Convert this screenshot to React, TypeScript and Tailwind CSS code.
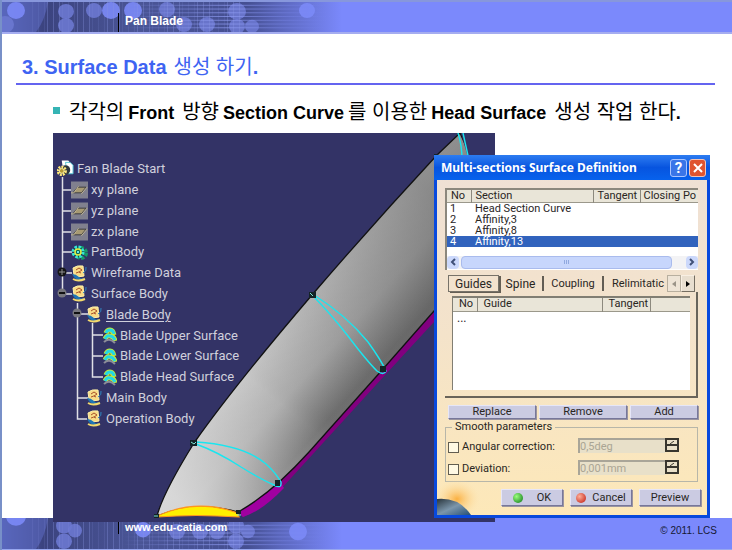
import React from "react";

const SANS = "font-['Liberation_Sans','Noto_Sans_CJK_KR',sans-serif]";

type Dot = [number, number, number];

const headerDots: Dot[] = [
  [14, 9, 9], [64, 10, 8], [64, 25, 8], [92, 9, 8], [109, 9, 9], [3, 24, 9], [131, 9, 9],
  [165, 8, 8], [182, 24, 8], [205, 24, 8], [235, 10, 9], [235, 26, 8], [250, 26, 7], [305, 9, 8],
];
const footerDots: Dot[] = [
  [14, -2, 10], [62, 8, 8], [62, 24, 8], [73, 13, 7], [92, -4, 8], [107, -4, 8], [141, 12, 8],
  [175, 14, 8], [198, 14, 8], [215, 14, 8], [234, 8, 8], [234, 24, 8], [246, 14, 7], [296, 14, 9],
];

function BandArt({ id, dots }: { id: string; dots: Dot[] }) {
  const verticals = Array.from({ length: 42 }, (_, i) => 30 + i * 5 + (i % 3));
  return (
    <svg className="absolute left-0 top-0 h-full w-[340px]" viewBox="0 0 340 32" preserveAspectRatio="none" aria-hidden="true">
      <defs>
        <linearGradient id={id}>
          <stop offset="0" stopColor="#5563b8" />
          <stop offset="0.12" stopColor="#3b437f" />
          <stop offset="0.4" stopColor="#4a5596" />
          <stop offset="0.72" stopColor="#454f92" />
          <stop offset="0.82" stopColor="#5b67bd" />
          <stop offset="1" stopColor="#7b89fc" />
        </linearGradient>
        <linearGradient id={id + "h"}>
          <stop offset="0" stopColor="#8e9bf2" stopOpacity="0" />
          <stop offset="0.5" stopColor="#8e9bf2" stopOpacity="0.75" />
          <stop offset="1" stopColor="#7a88fb" stopOpacity="0" />
        </linearGradient>
      </defs>
      <rect width="340" height="32" fill={`url(#${id})`} />
      <path d="M0 0H46Q43 20 34 32H0Z" fill="#5b69c0" opacity="0.6" />
      {dots.map(([x, y, r], i) => (
        <circle key={i} cx={x} cy={y} r={r} fill={i === 0 || i === 4 || i === 6 || i === 13 ? "#7b89f7" : "#6b78d0"} opacity="0.9" />
      ))}
      {verticals.map((x) => (
        <path key={x} d={`M${x + 0.5} 0V32`} stroke="#8794e0" strokeOpacity={x % 2 ? 0.35 : 0.15} />
      ))}
      {[3, 7, 11, 15, 19, 23, 27].map((y) => (
        <rect key={y} x="120" y={y} width="210" height="1" fill={`url(#${id}h)`} />
      ))}
    </svg>
  );
}

function StartIcon() {
  return (
    <svg width="17" height="18" viewBox="0 0 18 18" aria-hidden="true">
      <path d="M5 0h7l2 3v10H7z" fill="#fff" />
      <path d="M9 2h5l3 3v9h-6z" fill="#fff" stroke="#52c4d2" />
      <circle cx="9" cy="10" r="5" fill="#30383e" />
      <circle cx="5" cy="11" r="4" fill="none" stroke="#ffe979" strokeWidth="3" strokeDasharray="2 1" />
      <circle cx="5" cy="11" r="2.5" fill="#b59a36" stroke="#fff0a0" />
    </svg>
  );
}

function PlaneIcon() {
  return (
    <svg width="17" height="18" viewBox="0 0 18 18" aria-hidden="true">
      <path d="M0 0h18v18H0z" fill="#80808e" />
      <path d="M2 12l5-6h9l-5 6z" fill="#a79a73" stroke="#39393c" />
      <path d="M0 12h3l5-7M11 13l6-7" fill="none" stroke="#c1b795" />
    </svg>
  );
}

function PartIcon() {
  return (
    <svg width="17" height="17" viewBox="0 0 17 17" aria-hidden="true">
      <circle cx="10" cy="9" r="5" fill="none" stroke="#169b68" strokeWidth="4" strokeDasharray="3 1.5" />
      <circle cx="7" cy="8" r="5" fill="#153e42" stroke="#35e6d3" strokeWidth="3" strokeDasharray="2.5 1.4" />
      <circle cx="7" cy="8" r="3" fill="#086c59" stroke="#e5ef42" strokeWidth="1.5" />
      <path d="M6 7h2v2H6z" fill="#62eee6" />
    </svg>
  );
}

function BodyIcon() {
  return (
    <svg width="17" height="17" viewBox="0 0 17 17" aria-hidden="true">
      <path d="M2 3Q6 0 12 1L13 11Q8 13 3 10Z" fill="#f8dc86" stroke="#fff0aa" />
      <path d="M5 5l3-2 3 2-3 2M5 8q3-2 5 0" fill="none" stroke="#a9522c" />
      <path d="M1 9Q5 9 8 12T14 12Q11 17 5 14Q3 13 1 9" fill="#1f76b4" />
      <path d="M2 14Q7 17 14 14" stroke="#f3d96c" strokeWidth="2" fill="none" />
      <path d="M12 8Q16 6 15 2" stroke="#2f85bf" fill="none" />
    </svg>
  );
}

function SurfaceIcon() {
  return (
    <svg width="14" height="17" viewBox="0 0 14 17" aria-hidden="true" fill="none">
      <path d="M3 6Q4 3 7 3Q10 3 11 8" stroke="#c9ea35" strokeWidth="5" />
      <path d="M3 6Q4 3 7 3Q10 3 11 7" stroke="#22d8e6" strokeWidth="3" />
      <path d="M2 12Q4 8 7 9Q11 9 12 14" stroke="#c9ea35" strokeWidth="5" />
      <path d="M2 12Q4 8 7 9Q10 9 12 13" stroke="#22d8e6" strokeWidth="3" />
      <path d="M1 15Q6 10 12 16" stroke="#8c8c98" strokeWidth="2" />
    </svg>
  );
}

const treeItems: { name: string; indent: string; icon: () => React.ReactElement; current?: boolean }[] = [
  { name: "Fan Blade Start", indent: "pl-1", icon: StartIcon },
  { name: "xy plane", indent: "pl-[18px]", icon: PlaneIcon },
  { name: "yz plane", indent: "pl-[18px]", icon: PlaneIcon },
  { name: "zx plane", indent: "pl-[18px]", icon: PlaneIcon },
  { name: "PartBody", indent: "pl-[18px]", icon: PartIcon },
  { name: "Wireframe Data", indent: "pl-[18px]", icon: BodyIcon },
  { name: "Surface Body", indent: "pl-[18px]", icon: BodyIcon },
  { name: "Blade Body", indent: "pl-[33px]", icon: BodyIcon, current: true },
  { name: "Blade Upper Surface", indent: "pl-[50px]", icon: SurfaceIcon },
  { name: "Blade Lower Surface", indent: "pl-[50px]", icon: SurfaceIcon },
  { name: "Blade Head Surface", indent: "pl-[50px]", icon: SurfaceIcon },
  { name: "Main Body", indent: "pl-[33px]", icon: BodyIcon },
  { name: "Operation Body", indent: "pl-[33px]", icon: BodyIcon },
];

const BLADE = "M157 516Q163 493 194 443Q235 385 312 295Q373 224 437 155L460 133L495 210V246L434 311L383 369L309 452Q271 494 238 512Q197 500 157 516Z";

function Scene() {
  return (
    <svg className="absolute inset-0 h-full w-full" viewBox="53 133 442 389" aria-hidden="true">
      <defs>
        <linearGradient id="across" gradientUnits="userSpaceOnUse" x1="250" y1="370" x2="335" y2="446">
          <stop offset="0" stopColor="#c8c8c8" />
          <stop offset="0.4" stopColor="#acacac" />
          <stop offset="0.8" stopColor="#707070" />
          <stop offset="1" stopColor="#747474" />
        </linearGradient>
        <linearGradient id="along" gradientUnits="userSpaceOnUse" x1="190" y1="510" x2="440" y2="200">
          <stop offset="0" stopColor="#e2e2e2" stopOpacity="0.75" />
          <stop offset="0.35" stopColor="#ccc" stopOpacity="0.1" />
          <stop offset="0.4" stopColor="#555" stopOpacity="0.05" />
          <stop offset="1" stopColor="#555" stopOpacity="0.5" />
        </linearGradient>
      </defs>
      <path d="M495 246L434 311L383 369L279 483L238 512L243 517Q265 508 281 489L386 374L434 322L495 260Z" fill="#81007f" />
      <path d="M238 512L281 483L284 488Q262 511 243 517Z" fill="#a000a0" />
      <path d={BLADE} fill="url(#across)" />
      <path d={BLADE} fill="url(#along)" stroke="#111" strokeWidth="1.3" />
      <path d="M461 133L480 200H495V133Z" fill="#333366" />
      <path d="M157 516Q197 498 238 513L239 517Q195 514 157 517Z" fill="#ffef00" stroke="#ff941f" strokeWidth="1.2" />
      <g fill="none" stroke="#19e6f0" strokeWidth="1.4">
        <path d="M196 442Q244 445 266 464Q275 472 281 482Q282 489 274 485Q262 480 241 467Q218 452 196 444" />
        <path d="M314 295Q346 315 368 342Q381 360 386 371Q384 376 377 371Q366 360 348 336Q330 313 314 297" />
        <path d="M458 133Q462 145 462 160M463 133L469 160" />
      </g>
      <g fill="#142326">
        <path d="M190 440h7v6h-7zM309 292h7v6h-7zM275 480h5v6h-5zM380 366h6v6h-6zM154 514h5v4h-5zM236 510h5v4h-5zM434 154h4v4h-4z" />
      </g>
      <path d="M191 442l3 2 2-2M310 293l3 3M154 516h4M237 515h4" stroke="#7ce6d3" fill="none" />
      <g stroke="#e0e0e6" strokeWidth="1.5" fill="none">
        <path d="M62.5 177V294H72M62 190H72M62 211H72M62 232H72M62 252H72M62 273H72M77.5 303V419H87M77 314H88M77 398H88M92.5 323V377H103M92 335H103M92 356H103" />
      </g>
      {[[62, 272, true], [62, 293, false], [77, 313, false]].map(([x, y, plus]) => (
        <g key={String(x) + y}>
          <circle cx={Number(x)} cy={Number(y)} r="4.5" fill={plus ? "#151516" : "#77777e"} />
          <path d={`M${Number(x) - 3} ${y}h6`} stroke={plus ? "#909090" : "#111"} strokeWidth={plus ? 1 : 2} />
          {plus && <path d={`M${x} ${Number(y) - 3}v6`} stroke="#909090" />}
        </g>
      ))}
    </svg>
  );
}

const RAISED = "flex items-center justify-center border border-t-[#e6e6f8] border-l-[#e6e6f8] border-r-[#77779a] border-b-[#77779a] bg-[#cbcbe2] shadow-[1px_1px_0_#9a94a0]";

function SpinRow({ id, label, value }: { id: string; label: string; value: string }) {
  return (
    <div className="flex h-[22px] items-center">
      <input id={id} type="checkbox" className="h-[11px] w-[11px] shrink-0 appearance-none border border-[#625d50] bg-[#fff9e4]" />
      <label htmlFor={id} className="w-[119px] pl-[3px]">{label}</label>
      <input aria-label={label + " value"} disabled defaultValue={value} className="mb-1 h-[15px] w-[87px] border-l-2 border-t-2 border-[#a9a598] bg-[#e8e0c9] p-0 leading-3 text-[#aaa594]" />
      <span className="mb-1 flex w-[14px] flex-col">
        <button aria-label={"Increase " + label} className="flex h-2 items-center justify-center border-2 border-[#38362f] bg-[#e9e0c9]">
          <svg width="6" height="3" viewBox="0 0 6 3"><path d="M1 3l4-3" stroke="#38362f" /></svg>
        </button>
        <button aria-label={"Decrease " + label} className="h-[6px] border-2 border-t-0 border-[#38362f] bg-[#e9e0c9]" />
      </span>
    </div>
  );
}

function DefinitionDialog() {
  return (
    <section role="dialog" aria-label="Multi-sections Surface Definition" className="absolute left-[381px] top-[22px] z-20 flex h-[363px] w-[276px] flex-col border-[3px] border-t-0 border-[#0849dd] bg-linear-to-b from-[#eee0d6] via-[#f4e3ca] to-[#fde8b8] font-['Roboto',sans-serif] text-[12px] leading-[14px] text-[#29261f]">
      <div className="-mx-[3px] flex h-[25px] shrink-0 items-center bg-linear-to-b from-[#2d7cf1] via-[#0754df] to-[#0762ed] pl-[7px] pr-1 text-white">
        <h2 className="grow whitespace-nowrap font-['Noto_Sans',sans-serif] text-[12px] font-bold">Multi-sections Surface Definition</h2>
        <button aria-label="Help" className="mr-[2px] flex h-[18px] w-[17px] items-center justify-center rounded-[3px] border border-[#a9c5ff] bg-[#3975e8] text-[15px] font-bold">?</button>
        <button aria-label="Close" className="flex h-[18px] w-[17px] items-center justify-center rounded-[3px] border border-[#f2c4b8] bg-[#df5430]">
          <svg width="12" height="12" viewBox="0 0 12 12"><path d="M2 2l8 8M10 2l-8 8" stroke="#fff" strokeWidth="2" /></svg>
        </button>
      </div>
      <div className="relative flex grow flex-col pl-2 pr-[9px] pt-2">
        <div className="h-[82px] shrink-0 overflow-hidden border-l-2 border-t-2 border-[#8b877d] bg-white text-[11px]">
          <table className="w-full table-fixed border-collapse leading-[11px]">
            <colgroup><col className="w-[24px]" /><col className="w-[122px]" /><col className="w-[47px]" /><col /></colgroup>
            <thead>
              <tr className="h-3 border-b border-[#9b988b] bg-[#e9e5d8] text-left">
                <th className="border-r border-[#8c897e] p-0 pl-1 font-normal">No</th>
                <th className="border-r border-[#8c897e] p-0 pl-1 font-normal">Section</th>
                <th className="border-r border-[#8c897e] p-0 pl-1 font-normal">Tangent</th>
                <th className="whitespace-nowrap p-0 pl-[3px] font-normal">Closing Po</th>
              </tr>
            </thead>
            <tbody>
              {["Head Section Curve", "Affinity,3", "Affinity,8", "Affinity,13"].map((name, i) => (
                <tr key={name} className={i === 3 ? "h-[11px] bg-[#3163bd] text-white" : "h-[11px]"}>
                  <td className="p-0 pl-[3px]">{i + 1}</td>
                  <td className="p-0 pl-1">{name}</td>
                  <td className="p-0" /><td className="p-0" />
                </tr>
              ))}
            </tbody>
          </table>
          <div className="mt-[9px] flex h-[13px] gap-[2px] bg-[#f3f3f5]">
            <button aria-label="Scroll left" className="flex w-3 items-center justify-center rounded-sm bg-[#cbd8fb]">
              <svg width="6" height="8" viewBox="0 0 6 8"><path d="M5 1L2 4l3 3" fill="none" stroke="#405077" strokeWidth="2" /></svg>
            </button>
            <div className="mr-3 flex grow items-center justify-center gap-px rounded-sm border border-[#a9bbed] bg-[#c7d6fc]">
              <span className="h-1 w-px bg-[#91a9df]" /><span className="h-1 w-px bg-[#91a9df]" /><span className="h-1 w-px bg-[#91a9df]" />
            </div>
            <button aria-label="Scroll right" className="flex w-3 items-center justify-center rounded-sm bg-[#cbd8fb]">
              <svg width="6" height="8" viewBox="0 0 6 8"><path d="M1 1l3 3-3 3" fill="none" stroke="#405077" strokeWidth="2" /></svg>
            </button>
          </div>
        </div>

        <div role="tablist" className="mt-[5px] flex h-[17px] shrink-0 pl-[3px]">
          <button role="tab" aria-selected="true" className="w-[51px] border border-[#777269] shadow-[2px_1px_0_#655f55]">Guides</button>
          <button role="tab" aria-selected="false" className="my-px w-[45px] border-r-2 border-[#625d54]">Spine</button>
          <button role="tab" aria-selected="false" className="my-px w-[60px] border-r-2 border-[#625d54] text-[11px]">Coupling</button>
          <button role="tab" aria-selected="false" className="my-px w-[60px] whitespace-nowrap pl-2 text-left text-[11px]">Relimitatic</button>
          <button aria-label="Previous tabs" className="ml-[3px] flex w-[14px] items-center justify-center border border-[#b8af9f] bg-[#eee4d6]">
            <svg width="4" height="6" viewBox="0 0 4 6"><path d="M4 0v6L0 3z" fill="#9b9488" /></svg>
          </button>
          <button aria-label="Next tabs" className="flex w-[14px] items-center justify-center border border-b-[#746d61] border-r-[#746d61] border-l-[#f8efe3] border-t-[#f8efe3] bg-[#e8decf]">
            <svg width="4" height="6" viewBox="0 0 4 6"><path d="M0 0v6l4-3z" fill="#000" /></svg>
          </button>
        </div>
        <div className="h-[106px] shrink-0 border-b-2 border-r-2 border-[#69645a] pb-[6px] pl-[7px] pr-[6px] pt-1">
          <div className="h-full border-l border-t-2 border-[#817e73] bg-white">
            <table className="w-full table-fixed border-collapse leading-[12px]">
              <colgroup><col className="w-[24px]" /><col className="w-[125px]" /><col className="w-[48px]" /><col /></colgroup>
              <thead>
                <tr className="h-[13px] border-b border-[#9b988b] bg-[#e9e5d8] text-left text-[11px]">
                  <th className="border-r border-[#8c897e] p-0 pl-[6px] font-normal">No</th>
                  <th className="border-r border-[#8c897e] p-0 pl-[6px] font-normal">Guide</th>
                  <th className="border-r border-[#8c897e] p-0 pl-[6px] font-normal">Tangent</th>
                  <th className="p-0" />
                </tr>
              </thead>
              <tbody><tr><td className="p-0 pl-1">...</td><td /><td /><td /></tr></tbody>
            </table>
          </div>
        </div>
        <div className="mt-[7px] flex h-[14px] shrink-0 gap-[3px] pl-[3px] text-[11px]">
          <button className={`${RAISED} w-[88px]`}>Replace</button>
          <button className={`${RAISED} w-[88px]`}>Remove</button>
          <button className={`${RAISED} grow`}>Add</button>
        </div>
        <fieldset className="mt-px h-[62px] shrink-0 border border-[#b7b6a9] pl-[2px] text-[11px]">
          <legend className="ml-1 px-[3px] leading-[14px]">Smooth parameters</legend>
          <div className="pt-[2px]">
            <SpinRow id="angular" label="Angular correction:" value="0,5deg" />
            <SpinRow id="deviation" label="Deviation:" value="0,001mm" />
          </div>
        </fieldset>
        <svg className="absolute bottom-0 left-0" width="50" height="36" viewBox="0 0 50 36" aria-hidden="true">
          <defs>
            <radialGradient id="glow"><stop offset="0" stopColor="#fbb040" /><stop offset="1" stopColor="#fde8b8" stopOpacity="0" /></radialGradient>
            <linearGradient id="planet" x2="1" y2="1"><stop offset="0" stopColor="#29353d" /><stop offset="0.5" stopColor="#7c96ab" /><stop offset="1" stopColor="#254f75" /></linearGradient>
          </defs>
          <ellipse cx="20" cy="20" rx="24" ry="20" fill="url(#glow)" />
          <path d="M0 20Q22 18 34 36H0Z" fill="url(#planet)" />
        </svg>
        <div className="relative -mr-[3px] mt-[7px] flex h-[17px] shrink-0 justify-end gap-[7px] text-[11px]">
          <button className={`${RAISED} w-[62px] gap-[14px]`}><span className="h-[10px] w-[10px] rounded-full bg-radial-[at_35%_35%] from-[#9bff7d] to-[#087315]" />OK</button>
          <button className={`${RAISED} w-[62px] gap-[6px]`}><span className="h-[10px] w-[10px] rounded-full bg-radial-[at_35%_35%] from-[#ffae98] to-[#bd160b]" />Cancel</button>
          <button className={`${RAISED} w-[62px]`}>Preview</button>
        </div>
      </div>
    </section>
  );
}

export default function App() {
  return (
    <div className={`flex min-h-screen w-full flex-col overflow-hidden border-l-2 border-[#7890c8] bg-white ${SANS}`}>
      <header className="relative flex h-[34px] shrink-0 border-b-2 border-t-2 border-b-[#a5adf0] border-t-[#8797dc] bg-[#7b89fc]">
        <BandArt id="top-band" dots={headerDots} />
        <p className="relative ml-[116px] mt-[11px] border-l border-black pl-[6px] text-[12px] font-bold leading-4 text-white">Pan Blade</p>
      </header>
      <main className="flex flex-col">
        <h1 className="ml-[14px] mr-[17px] flex h-[51px] items-end gap-[7px] whitespace-nowrap border-b-2 border-[#6464f0] pb-[3px] pl-[6px] text-[20px] font-bold leading-[26px] text-[#3e64f2]">
          <span>3. Surface Data</span>
          <span className="font-normal">생성 하기<b>.</b></span>
        </h1>
        <div className="flex h-[48px] items-center whitespace-nowrap pl-[51px] pt-[6px] text-[18px] font-bold leading-[26px] text-black">
          <span className="mb-1 mr-[9px] h-[7px] w-[7px] bg-[#35b4b4]" />
          <p className="flex items-baseline gap-[4px]">
            <span className="text-[20px] font-normal">각각의</span>
            <span>Front</span>
            <span className="pl-1 text-[20px] font-normal">방향</span>
            <span>Section Curve</span>
            <span className="text-[20px] font-normal">를 이용한</span>
            <span>Head Surface</span>
            <span className="pl-1 text-[20px] font-normal">생성 작업 한다<b className="text-[18px]">.</b></span>
          </p>
        </div>
        <figure className="relative z-10 ml-[51px] h-[389px] w-[442px] bg-[#333366] pt-[26px]">
          <Scene />
          <ul className="relative grid h-[270px] auto-rows-fr font-['Roboto',sans-serif] text-[13px] leading-4 text-[#d0d0dc]">
            {treeItems.map(({ name, indent, icon: Icon, current }) => (
              <li key={name} className={`${indent} flex items-center gap-[3px] whitespace-nowrap`}>
                <Icon />
                <span className={current ? "underline underline-offset-2" : ""}>{name}</span>
              </li>
            ))}
          </ul>
          <DefinitionDialog />
        </figure>
      </main>
      <footer className="relative -mt-1 flex h-8 grow justify-between border-b border-[#98a7ef] bg-[#7b89fc]">
        <BandArt id="bottom-band" dots={footerDots} />
        <a href="http://www.edu-catia.com" className="relative z-20 ml-[116px] mt-1 h-3 border-l border-black pl-[6px] text-[11px] font-bold leading-[11px] text-white">www.edu-catia.com</a>
        <small className="mr-[15px] mt-[5px] text-[10px] leading-4 text-[#151834]">© 2011. LCS</small>
      </footer>
    </div>
  );
}
